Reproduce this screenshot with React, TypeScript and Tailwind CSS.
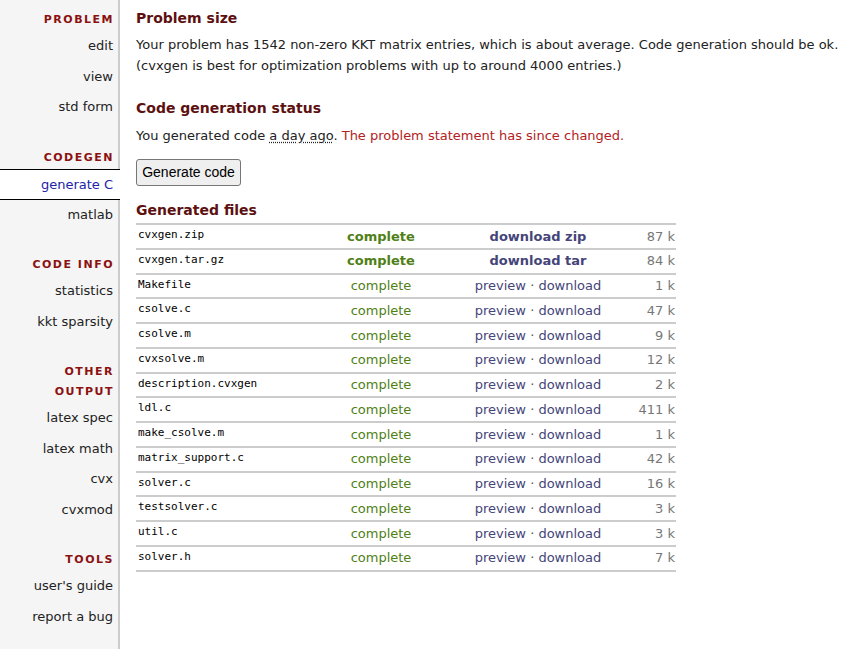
import React from 'react';

const sections = [
  { title: ['PROBLEM'], items: ['edit', 'view', 'std form'] },
  { title: ['CODEGEN'], items: ['generate C', 'matlab'] },
  { title: ['CODE INFO'], items: ['statistics', 'kkt sparsity'] },
  { title: ['OTHER', 'OUTPUT'], items: ['latex spec', 'latex math', 'cvx', 'cvxmod'] },
  { title: ['TOOLS'], items: ["user's guide", 'report a bug'] },
];

const files = [
  { name: 'cvxgen.zip', size: '87 k', archive: 'download zip' },
  { name: 'cvxgen.tar.gz', size: '84 k', archive: 'download tar' },
  { name: 'Makefile', size: '1 k' },
  { name: 'csolve.c', size: '47 k' },
  { name: 'csolve.m', size: '9 k' },
  { name: 'cvxsolve.m', size: '12 k' },
  { name: 'description.cvxgen', size: '2 k' },
  { name: 'ldl.c', size: '411 k' },
  { name: 'make_csolve.m', size: '1 k' },
  { name: 'matrix_support.c', size: '42 k' },
  { name: 'solver.c', size: '16 k' },
  { name: 'testsolver.c', size: '3 k' },
  { name: 'util.c', size: '3 k' },
  { name: 'solver.h', size: '7 k' },
];

const Sidebar = () => (
  <div className="w-[120px] shrink-0 bg-[#f5f5f5] border-r-2 border-[#cccccc] pt-[10px] min-h-[649px]">
    {sections.map((s, i) => (
      <div key={i} className={i > 0 ? 'mt-[25px]' : ''}>
        {s.title.map((t) => (
          <div
            key={t}
            className="text-right pr-[4px] text-[11px] font-bold tracking-[1.5px] text-[#8b1111] leading-[20px]"
          >
            {t}
          </div>
        ))}
        <div className="mt-[1px]">
          {s.items.map((it) =>
            it === 'generate C' ? (
              <div
                key={it}
                className="text-right pr-[5px] text-[13px] leading-[29px] h-[31px] bg-white text-[#2222aa] border-y border-black -mr-[2px]"
              >
                <span className="mr-[2px]">{it}</span>
              </div>
            ) : (
              <div key={it} className="text-right pr-[5px] text-[13px] leading-[30.5px] text-[#222]">
                {it}
              </div>
            )
          )}
        </div>
      </div>
    ))}
  </div>
);

const App = () => {
  return (
    <div className="flex bg-white text-[#222] font-['DejaVu_Sans',Verdana,sans-serif]">
      <Sidebar />
      <div className="pl-[16px] pt-[8px] flex-1">
        <h2 className="text-[14px] font-bold text-[#5c1010] leading-[20px]">Problem size</h2>
        <p className="mt-[6px] text-[13px] leading-[21px]">
          Your problem has 1542 non-zero KKT matrix entries, which is about average. Code generation should be ok.
          <br />
          (cvxgen is best for optimization problems with up to around 4000 entries.)
        </p>
        <h2 className="mt-[22px] text-[14px] font-bold text-[#5c1010] leading-[20px]">Code generation status</h2>
        <p className="mt-[8px] text-[13px] leading-[20px]">
          You generated code{' '}
          <span className="underline decoration-dotted underline-offset-2">a day ago</span>.{' '}
          <span className="text-[#b22222]">The problem statement has since changed.</span>
        </p>
        <button className="mt-[13px] h-[27px] w-[105px] bg-[#efefef] border border-[#767676] rounded-[3px] text-[14px] text-black font-['Liberation_Sans',Arial,sans-serif]">
          Generate code
        </button>
        <h2 className="mt-[14px] text-[14px] font-bold text-[#5c1010] leading-[20px]">Generated files</h2>
        <table className="mt-[3px] w-[540px] border-collapse border-t-2 border-[#cccccc]">
          <tbody>
            {files.map((f) => (
              <tr key={f.name} className="border-b-2 border-[#cccccc] h-[24.75px]">
                <td className="pl-[2px] py-0 text-[11px] font-['DejaVu_Sans_Mono',monospace] align-top pt-[2px] w-[170px] text-black">
                  {f.name}
                </td>
                <td className={`text-center text-[13px] text-[#4f7f16] w-[150px] ${f.archive ? 'font-bold' : ''}`}>
                  complete
                </td>
                <td className={`text-center text-[13px] text-[#45457a] pl-[4px] ${f.archive ? 'font-bold' : ''}`}>
                  {f.archive ? (
                    f.archive
                  ) : (
                    <>
                      preview <span className="text-[#555]">·</span> download
                    </>
                  )}
                </td>
                <td className="text-right pr-[1px] text-[13px] text-[#777] w-[60px]">{f.size}</td>
              </tr>
            ))}
          </tbody>
        </table>
      </div>
    </div>
  );
};

export default App;
